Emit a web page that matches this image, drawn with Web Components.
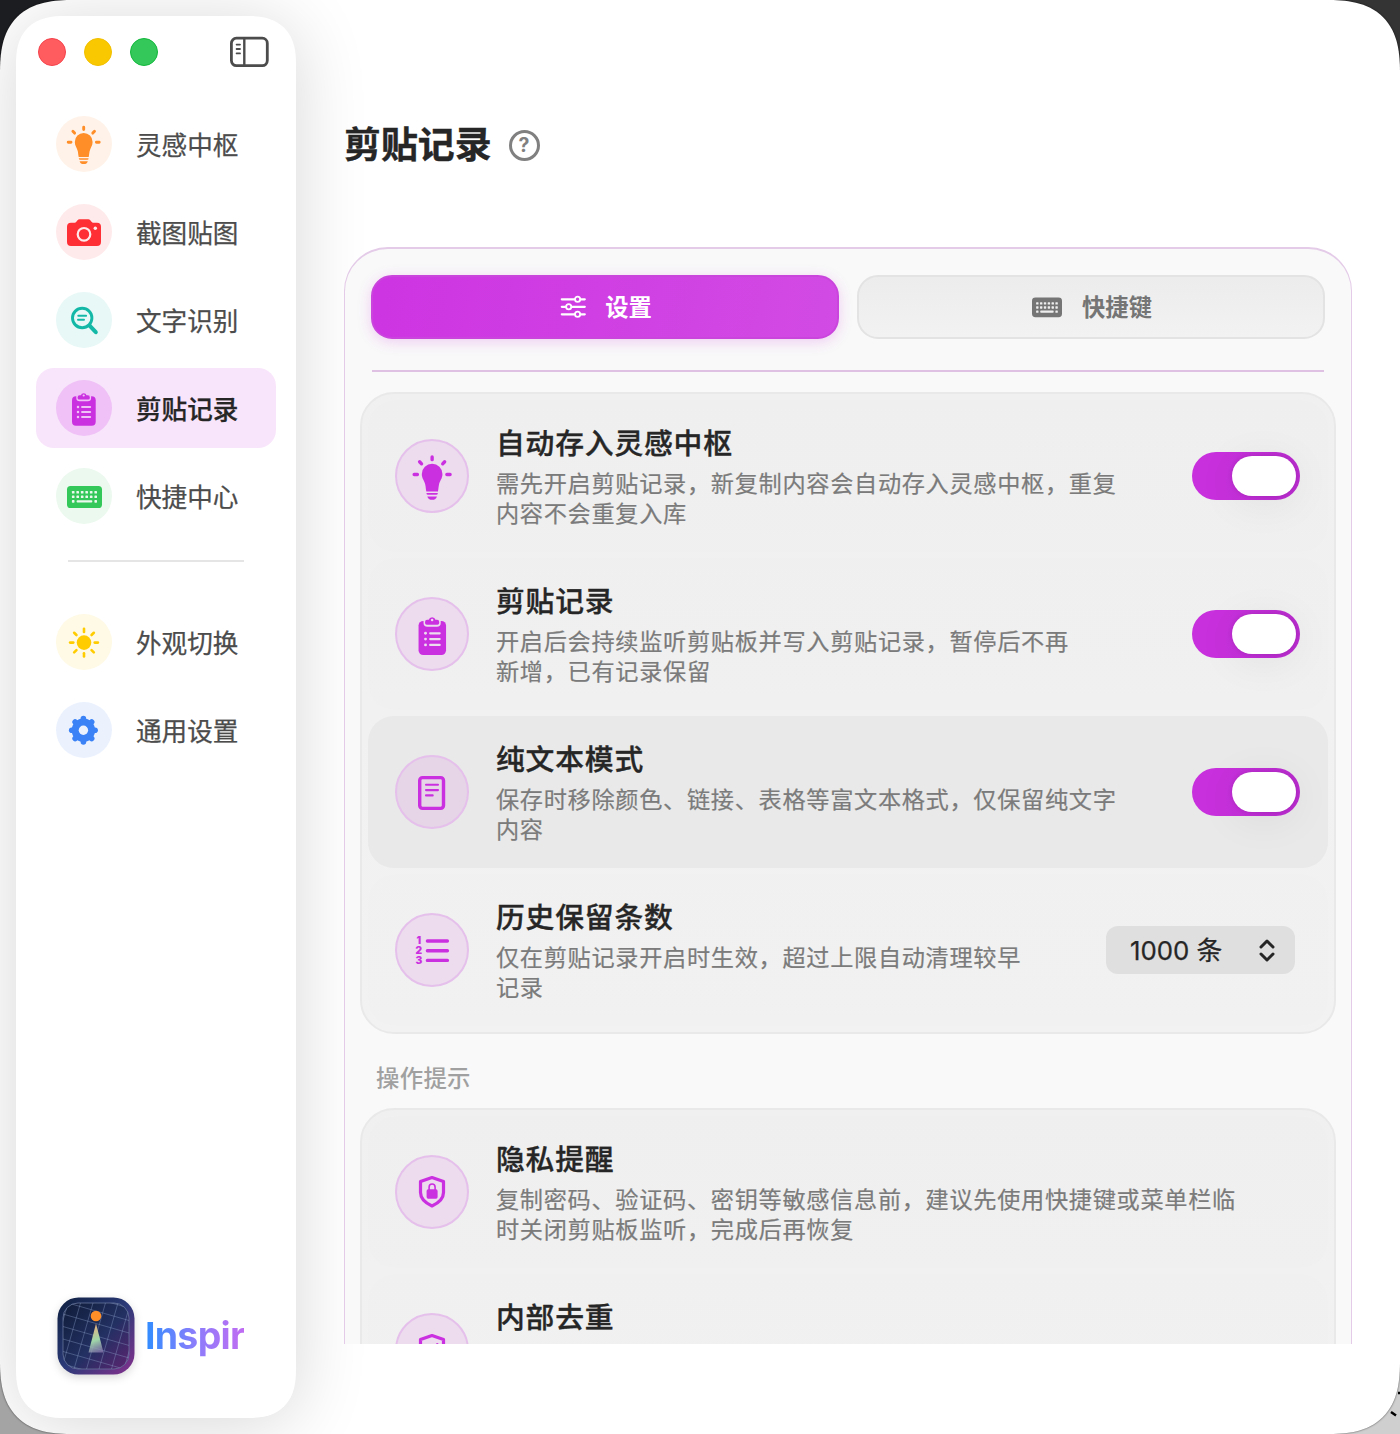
<!DOCTYPE html>
<html lang="zh-CN">
<head>
<meta charset="utf-8">
<title>Inspir</title>
<style>
  html, body { margin: 0; height: 100%; }
  body {
    overflow: hidden;
    font-family: Inter, "Noto Sans CJK SC", sans-serif;
    color: #262626;
    background: linear-gradient(90deg, #1c1d21 50%, #343434 50%) top / 100% 50% no-repeat,
      linear-gradient(90deg, #a4a4a4, #a4a4a4 50%, #cfcfcf 50%) bottom / 100% 50% no-repeat;
  }
</style>
</head>
<body>
<inspir-window>
  <side-bar slot="sidebar">
    <side-item icon="bulb" style="--tint:#ff8d28;--disc:#fff3e9">灵感中枢</side-item>
    <side-item icon="camera" style="--tint:#ff3035;--disc:#ffeaeb">截图贴图</side-item>
    <side-item icon="search" style="--tint:#14b8a6;--disc:#e7f8f6">文字识别</side-item>
    <side-item icon="clipboard" selected style="--tint:#cb30e0;--disc:#efc1f6">剪贴记录</side-item>
    <side-item icon="keyboard" style="--tint:#34c759;--disc:#ebf9ee">快捷中心</side-item>
    <side-item icon="sun" slot="extra" style="--tint:#ffcc00;--disc:#fffae5">外观切换</side-item>
    <side-item icon="gear" slot="extra" style="--tint:#3b82f6;--disc:#ebf2fe">通用设置</side-item>
  </side-bar>

  <page-title>剪贴记录</page-title>
  <scroll-panel>
    <tab-button slot="tabs" icon="sliders" active>设置</tab-button>
    <tab-button slot="tabs" icon="keys">快捷键</tab-button>

    <setting-card>
      <setting-row icon="bulb">
        <span slot="title">自动存入灵感中枢</span>
        需先开启剪贴记录，新复制内容会自动存入灵感中枢，重复<br>内容不会重复入库
        <toggle-switch slot="control"></toggle-switch>
      </setting-row>
      <setting-row icon="clipboard">
        <span slot="title">剪贴记录</span>
        开启后会持续监听剪贴板并写入剪贴记录，暂停后不再<br>新增，已有记录保留
        <toggle-switch slot="control"></toggle-switch>
      </setting-row>
      <setting-row icon="doc" hovered>
        <span slot="title">纯文本模式</span>
        保存时移除颜色、链接、表格等富文本格式，仅保留纯文字<br>内容
        <toggle-switch slot="control"></toggle-switch>
      </setting-row>
      <setting-row icon="list">
        <span slot="title">历史保留条数</span>
        仅在剪贴记录开启时生效，超过上限自动清理较早<br>记录
        <pop-select slot="control">1000 条</pop-select>
      </setting-row>
    </setting-card>

    <section-label>操作提示</section-label>
    <setting-card>
      <setting-row icon="lock">
        <span slot="title">隐私提醒</span>
        复制密码、验证码、密钥等敏感信息前，建议先使用快捷键或菜单栏临<br>时关闭剪贴板监听，完成后再恢复
      </setting-row>
      <setting-row icon="check">
        <span slot="title">内部去重</span>
      </setting-row>
    </setting-card>
  </scroll-panel>
</inspir-window>

<script>
/********************************* Icons ******************************************/
// --tint is the glyph colour, --disc the colour of what lies behind it
const T = 'var(--tint)';
const D = 'var(--disc)';

function spokes(d, cx, cy) {
  let out = '';
  for (let a = 0; a < 360; a += 45) {
    out += `<path d="${d}" transform="rotate(${a} ${cx} ${cy})"/>`;
  }
  return out;
}

function keyDots(xs, ys, size) {
  return ys.map(y => xs.map(x =>
    `<rect x="${x - size / 2}" y="${y - size / 2}" width="${size}" height="${size}" rx=".6"/>`).join('')).join('');
}

const KEY_COLS = [17.2, 21.7, 26.2, 30.7, 35.2, 39.7];
const SHIELD = `<path d="M37 22.5 48.5 26.6V37.5C48.5 44 43.5 48 37 51 30.5 48 25.5 44 25.5 37.5V26.6Z" fill="none" stroke="${T}" stroke-width="3.2" stroke-linejoin="round"/>`;

const ICONS = {
  bulb: { box: '0 0 56 56', size: 56, svg: `
    <g fill="${T}"><path d="M27.7 17a8.9 8.9 0 0 0-8.9 8.9c0 4 2.3 5.8 3 9.3.5 2.4.5 4.1.9 5.8h10c.4-1.7.4-3.4.9-5.8.7-3.5 3-5.3 3-9.3A8.9 8.9 0 0 0 27.7 17z"/>
    <path d="M22.9 42.3h9.6v.4q0 1.100-1.100 1.100h-7.400q-1.100 0-1.100-1.100z"/><path d="M23.600 45.200h8.200q-.8 2.900-4.100 2.900t-4.100-2.900z"/></g>
    <path d="M27.700 11.200v2.300M12.200 26.300h2.800M40.400 26.300h2.800M16.900 15.300l1.700 1.800M38.500 15.300l-1.700 1.800" stroke="${T}" stroke-width="2.900" stroke-linecap="round"/>` },
  camera: { box: '0 0 56 56', size: 56, svg: `
    <path d="M15 18.7h3.6q1 0 1.700-.9l1.200-1.500q.8-1 2-1h8.800q1.200 0 2 1l1.200 1.500q.7.9 1.700.9H41a4 4 0 0 1 4 4V38a4 4 0 0 1-4 4H15a4 4 0 0 1-4-4V22.700a4 4 0 0 1 4-4z" fill="${T}"/>
    <circle cx="28" cy="30.3" r="6.3" fill="none" stroke="${D}" stroke-width="2.2"/><circle cx="39.3" cy="24.3" r="1.7" fill="${D}"/>` },
  search: { box: '0 0 56 56', size: 56, svg: `
    <g fill="none" stroke="${T}" stroke-linecap="round"><circle cx="26.2" cy="26" r="9.7" stroke-width="2.9"/>
    <path d="M33.6 33.6 39.8 40.2" stroke-width="4"/><path d="M22.3 23.7h7.8M22 27.7h6" stroke-width="2"/></g>` },
  clipboard: { box: '0 0 56 56', size: 56, svg: `
    <rect x="16" y="16.3" width="23.7" height="29.4" rx="4" fill="${T}"/>
    <path d="M21.8 15.5v2.5q0 1.800 1.800 1.800h8.200q1.800 0 1.800-1.800v-2.500" fill="${T}" stroke="${D}" stroke-width="3"/>
    <path d="M21.6 17.200q0-1.800 1.800-1.800h1.400a3 3 0 0 1 5.800 0H32q1.800 0 1.800 1.800v.9q0 1.500-1.500 1.500h-9.200q-1.500 0-1.500-1.500z" fill="${T}"/>
    <circle cx="27.7" cy="15.5" r="1.1" fill="${D}"/>
    <path d="M26 27h8.200M26 32h8.200M26 37h8.200" stroke="${D}" stroke-width="1.9" stroke-linecap="round"/>
    <g fill="${D}"><circle cx="22" cy="27" r="1.25"/><circle cx="22" cy="32" r="1.25"/><circle cx="22" cy="37" r="1.25"/></g>` },
  keyboard: { box: '0 0 56 56', size: 56, svg: `
    <rect x="11" y="18" width="35" height="22" rx="3.6" fill="${T}"/>
    <g fill="${D}">${keyDots(KEY_COLS, [24.3, 28.8], 2.6)}
    ${keyDots([17.2, 39.7], [33.4], 2.6)}<rect x="20.6" y="32.3" width="15.7" height="2.3" rx=".8"/></g>` },
  sun: { box: '0 0 56 56', size: 56, svg: `
    <circle cx="28" cy="28.6" r="7.3" fill="${T}"/><g stroke="${T}" stroke-width="2.6" stroke-linecap="round">${spokes('M28 17.9V14.7', 28, 28.6)}</g>` },
  gear: { box: '0 0 56 56', size: 56, svg: `
    <circle cx="27.4" cy="28.3" r="11.7" fill="${T}"/><g stroke="${T}" stroke-width="5.6" stroke-linecap="round">${spokes('M27.4 22V16.6', 27.4, 28.3)}</g>
    <circle cx="27.4" cy="28.3" r="4.7" fill="${D}"/>` },
  doc: { box: '0 0 74 74', size: 74, svg: `
    <g fill="none" stroke="${T}"><rect x="24.7" y="22.6" width="23.8" height="30.8" rx="2.8" stroke-width="3.4"/>
    <path d="M31 29.8h12M31 35.1h12M31 40.4h6.7" stroke-width="2.1" stroke-linecap="round"/></g>` },
  list: { box: '0 0 74 74', size: 74, svg: `
    <path d="M32.4 28h20M32.4 37.7h20M32.4 47.4h20" stroke="${T}" stroke-width="3.4" stroke-linecap="round"/>
    <g fill="${T}" font-family="Inter" font-size="10.2" font-weight="900" text-anchor="middle">
    <text x="23.8" y="31.2">1</text><text x="23.8" y="41.2">2</text><text x="23.8" y="51">3</text></g>` },
  lock: { box: '0 0 74 74', size: 74, svg: `${SHIELD}
    <rect x="31.6" y="34.3" width="11" height="9.4" rx="1.6" fill="${T}"/>
    <path d="M34.1 35v-2.800a3 3.200 0 0 1 6 0V35" fill="none" stroke="${T}" stroke-width="1.6"/>` },
  check: { box: '0 0 74 74', size: 74, svg: `${SHIELD}
    <path d="M31.5 37.5 35.5 42 42.3 31.3" fill="none" stroke="${T}" stroke-width="2.6" stroke-linecap="round" stroke-linejoin="round"/>` },
  sliders: { box: '0 0 26 26', size: 26, svg: `
    <g fill="none" stroke="#fff" stroke-width="2.2" stroke-linecap="round"><path d="M1.800 5.300h12.700M20.800 5.300h4M1.800 12.800h3.800M11.800 12.800h13M1.800 20.300h12.700M20.800 20.300h4"/>
    <circle cx="17.6" cy="5.3" r="2.6" stroke-width="1.8"/><circle cx="8.7" cy="12.8" r="2.6" stroke-width="1.8"/><circle cx="17.6" cy="20.3" r="2.6" stroke-width="1.8"/></g>` },
  keys: { box: '11 14 35 28', size: 30, svg: `
    <rect x="11" y="17" width="35" height="23" rx="4" fill="#757575"/>
    <g fill="#eee">${keyDots(KEY_COLS, [23.8, 28.5], 2.8)}
    ${keyDots([17.2, 39.7], [33.4], 2.8)}<rect x="20.6" y="32.1" width="15.7" height="2.6" rx=".8"/></g>` }
};

function drawIcon(name, scale = 1) {
  const icon = ICONS[name];
  const size = icon.size * scale;
  return `<svg viewBox="${icon.box}" width="${size}" height="${size}" aria-hidden="true">${icon.svg}</svg>`;
}

// Shared base: fills an open shadow root with what render() returns
class BaseElement extends HTMLElement {
  connectedCallback() {
    if (this.shadowRoot) return;
    this.attachShadow({ mode: 'open' });
    this.shadowRoot.innerHTML = this.render();
  }
}

/********************************* InspirWindow ******************************************/
customElements.define('inspir-window', class extends BaseElement {
  render() {
    return `
    <style>
      :host { display: block; position: relative; height: 1434px; }
      .frame {
        box-sizing: border-box; height: 100%; display: flex; padding: 16px 0 16px 16px;
        background: #fff; border-radius: 56px; overflow: hidden;
        box-shadow: 0 0 2px rgba(0, 0, 0, .7);
      }
      @supports (corner-shape: squircle) {
        .frame { border-radius: 74px; corner-shape: superellipse(1.4); }
      }
      main { flex: 1; padding: 104px 48px 0 48px; display: flex; flex-direction: column; min-width: 0; }
      .desk { position: absolute; right: 0; bottom: 0; z-index: 1; }
    </style>
    <div class="frame"><slot name="sidebar"></slot><main><slot></slot></main></div>
    <svg class="desk" width="12" height="50" stroke="#000" stroke-width="2.5"><path d="M10 9h2M3 28l5 3.5"/></svg>`;
  }
});

/********************************* SideBar ******************************************/
customElements.define('side-bar', class extends BaseElement {
  render() {
    return `
    <style>
      :host {
        box-sizing: border-box; width: 280px; height: 1402px; flex: none; display: flex; flex-direction: column;
        padding: 20px; background: #fff; border-radius: 40px;
        box-shadow: 0 6px 72px rgba(0, 0, 0, .16);
        position: relative;
      }
      @supports (corner-shape: squircle) {
        :host { border-radius: 48px; corner-shape: superellipse(1.3); }
      }
      header { display: flex; align-items: center; height: 32px; padding: 0 7px 0 2px; margin-bottom: 36px; }
      i { box-sizing: border-box; width: 28px; height: 28px; border-radius: 50%; margin-right: 18px; border: 1px solid; }
      .close { background: #ff5c60; border-color: #f4434b; }
      .min { background: #fac800; border-color: #f0bf00; }
      .max { background: #34c759; border-color: #12b83c; }
      header svg { margin-left: auto; }
      nav { display: flex; flex-direction: column; gap: 8px; }
      hr { width: 176px; height: 2px; margin: 24px auto 40px; border: 0; background: #e5e5e5; }
      brand-mark { margin-top: auto; }
    </style>
    <header><i class="close"></i><i class="min"></i><i class="max"></i>
      <svg width="40" height="32" fill="none" stroke="#4c4c4c" stroke-width="2.8" stroke-linecap="round">
        <rect x="2.4" y="2.2" width="35.9" height="27.4" rx="5"/><path d="M15.300 2.500v27" stroke-width="2.4"/>
        <path d="M7.600 8.600h3.400M7.600 13h3.400M7.600 17.400h3.400" stroke-width="1.8"/>
      </svg>
    </header>
    <nav><slot></slot></nav><hr><nav><slot name="extra"></slot></nav>
    <brand-mark></brand-mark>`;
  }
});

/********************************* SideItem ******************************************/
customElements.define('side-item', class extends BaseElement {
  render() {
    return `
    <style>
      :host {
        display: flex; align-items: center; gap: 24px; height: 80px; padding-left: 20px;
        border-radius: 18px; font-size: 25.6px; line-height: 36px; color: #4c4c4c;
        -webkit-text-stroke: .25px;
      }
      :host([selected]) { background: #f8e5fb; color: #262626; font-weight: 500; }
      .disc { width: 56px; height: 56px; border-radius: 50%; background: var(--disc); }
      svg { display: block; }
      .label { padding-top: 3px; }
    </style>
    <div class="disc">${drawIcon(this.getAttribute('icon'))}</div><span class="label"><slot></slot></span>`;
  }
});

/********************************* BrandMark ******************************************/
customElements.define('brand-mark', class extends BaseElement {
  render() {
    let grid = '';
    for (let p = -60; p <= 60; p += 12) grid += `M${p}-60V60M-60 ${p}H60`;
    return `
    <style>
      :host { display: flex; align-items: center; height: 77px; padding: 0 0 24px 21px; gap: 10px; }
      svg { flex: none; filter: drop-shadow(0 3px 4px rgba(0, 0, 0, .15)); }
      b {
        font: 700 37.5px/50px Inter, sans-serif; letter-spacing: -.75px; color: transparent;
        background: linear-gradient(90deg, #2f8dff, #8a7dfb 50%, #c06cf2); -webkit-background-clip: text; background-clip: text;
      }
    </style>
    <svg width="78" height="78" viewBox="0 0 78 78">
      <defs>
        <linearGradient id="bg" x1="0" y1="0" x2="1" y2="1"><stop offset="0" stop-color="#0e1f3f"/><stop offset=".5" stop-color="#2b3a78"/><stop offset="1" stop-color="#86308f"/></linearGradient>
        <linearGradient id="in" x1="0" y1="0" x2="1" y2="1"><stop offset="0" stop-color="#101c38"/><stop offset=".55" stop-color="#223062"/><stop offset="1" stop-color="#5c2470"/></linearGradient>
        <linearGradient id="beam" x1=".5" y1="0" x2=".7" y2="1"><stop offset="0" stop-color="#ecae7c"/><stop offset=".55" stop-color="#9fd6a8"/><stop offset="1" stop-color="#8f82b4" stop-opacity=".7"/></linearGradient>
        <clipPath id="clip"><rect x="6" y="6" width="66" height="66" rx="15"/></clipPath>
      </defs>
      <rect x=".5" y=".5" width="77" height="77" rx="21" fill="url(#bg)"/>
      <rect x="6" y="6" width="66" height="66" rx="15" fill="url(#in)" stroke="#66739b" stroke-width=".8"/>
      <g clip-path="url(#clip)"><path transform="translate(39 39) rotate(16)" d="${grid}" stroke="#8fa6cf" stroke-opacity=".42" stroke-width=".8" fill="none"/></g>
      <path d="M39 26.5 46.5 55.5H31.5Z" fill="url(#beam)"/><circle cx="39" cy="19" r="5.3" fill="#ff8d28"/>
    </svg><b>Inspir</b>`;
  }
});

/********************************* PageTitle ******************************************/
customElements.define('page-title', class extends BaseElement {
  render() {
    return `
    <style>
      :host { display: flex; align-items: center; height: 50px; gap: 17px; margin-bottom: 77px; }
      h1 { margin: 0; font-size: 36.9px; line-height: 50px; font-weight: 700; -webkit-text-stroke: .4px; }
      .help {
        box-sizing: border-box; width: 31px; height: 31px; border: 3px solid #808080; border-radius: 50%;
        font: 700 19.5px/25px Inter, sans-serif; color: #808080; text-align: center;
      }
    </style>
    <h1><slot></slot></h1><div class="help">?</div>`;
  }
});

/********************************* ScrollPanel ******************************************/
customElements.define('scroll-panel', class extends BaseElement {
  render() {
    return `
    <style>
      :host { display: block; height: 1097px; overflow: hidden; position: relative; }
      .panel {
        box-sizing: border-box; height: 1400px; padding: 26px 15px; background: #f9f9f9;
        border: 1px solid #e4cbe8; border-top-width: 2px; border-radius: 44px;
      }
      .tabs { display: flex; gap: 18px; padding: 0 11px; }
      hr { height: 2px; margin: 31px 12px 20px; border: 0; background: #dfc1e4; }
    </style>
    <div class="panel"><div class="tabs"><slot name="tabs"></slot></div><hr><slot></slot></div>`;
  }
});

/********************************* TabButton ******************************************/
customElements.define('tab-button', class extends BaseElement {
  render() {
    return `
    <style>
      :host {
        box-sizing: border-box; flex: 1; height: 64px; display: flex; align-items: center; justify-content: center; gap: 20px;
        padding-left: 2px; border: 2px solid #e3e3e3; border-radius: 21px; background: linear-gradient(#ececec, #f2f2f2);
        font-size: 23.3px; line-height: 34px; font-weight: 700; color: #757575;
      }
      :host([active]) {
        gap: 19px; color: #fff; border-color: #c945dc; background: linear-gradient(100deg, #cd34e2, #d24be4) border-box;
        box-shadow: 0 3px 14px rgba(203, 48, 224, .22);
      }
      span { padding-top: 2px; }
    </style>
    ${drawIcon(this.getAttribute('icon'))}<span><slot></slot></span>`;
  }
});

/********************************* SettingCard ******************************************/
customElements.define('setting-card', class extends BaseElement {
  render() {
    return `
    <style>
      :host {
        display: flex; flex-direction: column; gap: 6px; padding: 6px;
        border: 2px solid #e9e9e9; border-radius: 34px; background: linear-gradient(#f0f0f0, #f2f2f2);
      }
    </style>
    <slot></slot>`;
  }
});

customElements.define('section-label', class extends BaseElement {
  render() {
    return `
    <style>
      :host {
        display: block; height: 74px; padding-left: 16px; font-size: 23.4px; letter-spacing: .3px;
        line-height: 89px; font-weight: 500; color: #a0a0a0;
      }
    </style>
    <slot></slot>`;
  }
});

/********************************* SettingRow ******************************************/
customElements.define('setting-row', class extends BaseElement {
  render() {
    const name = this.getAttribute('icon');
    return `
    <style>
      :host {
        --tint: #cb30e0; --disc: #ecdcee;
        box-sizing: border-box; height: 152px; display: flex; align-items: center; gap: 27px; padding: 0 28px 0 27px;
        border-radius: 26px; background: rgba(0, 0, 0, .003);
      }
      :host([hovered]) { --disc: #e5d5e7; background: #e9e9e9; }
      .disc {
        box-sizing: border-box; width: 74px; height: 74px; flex: none; display: grid; place-content: center;
        border: 2px solid #e5c0eb; border-radius: 50%; background: var(--disc);
      }
      svg { display: block; }
      .text { flex: 1; min-width: 0; white-space: nowrap; }
      .title {
        margin-bottom: 4px; font-size: 28.8px; letter-spacing: .8px; line-height: 42px; font-weight: 500; color: #262626;
        -webkit-text-stroke: .35px;
      }
      .desc { height: 60px; font-size: 23.2px; letter-spacing: .68px; line-height: 30px; color: #7b7b7b; -webkit-text-stroke: .2px; }
    </style>
    <div class="disc">${drawIcon(name, ICONS[name].size === 56 ? 1.16 : 1)}</div>
    <div class="text"><div class="title"><slot name="title"></slot></div><div class="desc"><slot></slot></div></div>
    <slot name="control"></slot>`;
  }
});

/********************************* Controls ******************************************/
customElements.define('toggle-switch', class extends BaseElement {
  render() {
    return `
    <style>
      :host {
        box-sizing: border-box; display: flex; justify-content: flex-end; width: 108px; height: 48px; padding: 4px;
        border-radius: 24px; background: linear-gradient(90deg, #c730dc 30%, #bb2cd1);
      }
      i { width: 64px; height: 40px; border-radius: 20px; background: #fff; box-shadow: 0 6px 44px rgba(0, 0, 0, .07), 0 0 5px rgba(0, 0, 0, .12); }
    </style>
    <i></i>`;
  }
});

customElements.define('pop-select', class extends BaseElement {
  render() {
    return `
    <style>
      :host {
        box-sizing: border-box; display: flex; align-items: center; justify-content: space-between;
        width: 189px; height: 48px; margin-right: 5px; padding: 2px 18px 0 24px; border-radius: 12px;
        background: #dfdfdf; font-size: 25.8px; line-height: 46px; color: #262626; -webkit-text-stroke: .25px;
      }
    </style>
    <slot></slot>
    <svg width="20" height="24" fill="none" stroke="#262626" stroke-width="3" stroke-linecap="round" stroke-linejoin="round"><path d="M4 8l6-6 6 6M4 15l6 6 6-6"/></svg>`;
  }
});
</script>
</body>
</html>
